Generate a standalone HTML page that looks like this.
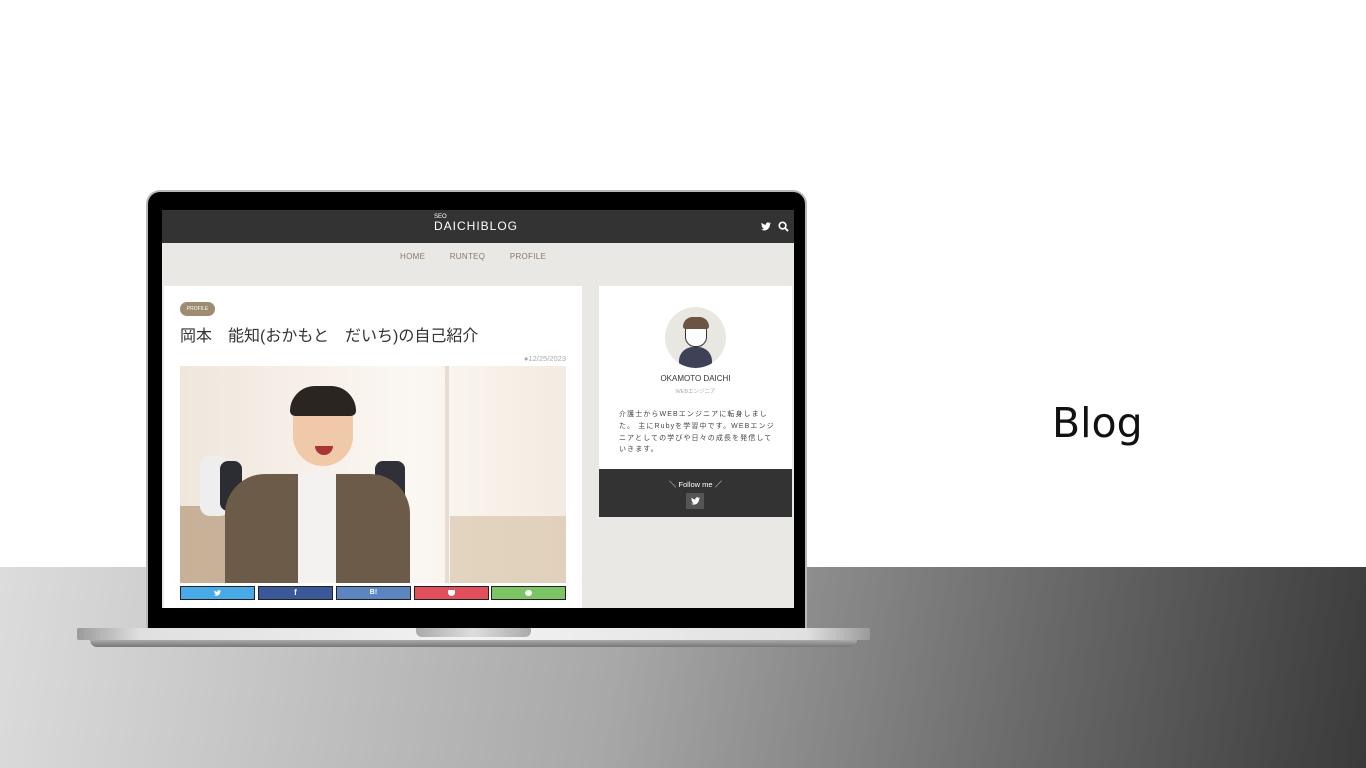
<!DOCTYPE html>
<html><head><meta charset="utf-8"><style>
*{margin:0;padding:0;box-sizing:border-box}
body{width:1366px;height:768px;position:relative;overflow:hidden;background:#fff;font-family:"Liberation Sans","Noto Sans CJK JP",sans-serif}
.floor{position:absolute;left:0;top:567px;width:1366px;height:201px;background:linear-gradient(100deg,#dcdcdc 0%,#a8a8a8 45%,#6a6a6a 75%,#3a3a3a 100%)}
.abs{position:absolute}
</style></head><body>
<div class="floor"></div>
<div class="abs" style="left:1052px;top:399px;font-size:41px;color:#111;font-family:'DejaVu Sans','Liberation Sans',sans-serif">Blog</div>

<div class="abs" style="left:146px;top:190px;width:661px;height:440px;background:#000;border-radius:14px 14px 0 0;border:2px solid #b8b8b8;border-bottom:none"></div>
<div class="abs" style="left:162px;top:210px;width:632px;height:398px;background:#e9e8e4;overflow:hidden">
  <div class="abs" style="left:0;top:0;width:632px;height:33px;background:#333"></div>
  <div class="abs" style="left:272px;top:4px;font-size:6px;color:#fff">SEO</div>
  <div class="abs" style="left:272px;top:9px;font-size:12px;color:#fff;letter-spacing:1px">DAICHIBLOG</div>
  <svg class="abs" style="left:599px;top:12px" width="10" height="9" viewBox="0 0 24 20"><path fill="#fff" d="M24 2.4c-.9.4-1.8.6-2.8.8 1-.6 1.8-1.6 2.2-2.7-1 .6-2 1-3.1 1.2C19.3.7 18 0 16.6 0c-2.7 0-4.9 2.2-4.9 4.9 0 .4 0 .8.1 1.1C7.7 5.8 4.1 3.9 1.7.9c-.4.7-.7 1.6-.7 2.5 0 1.7.9 3.2 2.2 4.1-.8 0-1.6-.2-2.2-.6v.1c0 2.4 1.7 4.4 3.9 4.8-.4.1-.8.2-1.3.2-.3 0-.6 0-.9-.1.6 2 2.4 3.4 4.6 3.4-1.7 1.3-3.8 2.1-6.1 2.1-.4 0-.8 0-1.2-.1 2.2 1.4 4.8 2.2 7.5 2.2 9.1 0 14-7.5 14-14v-.6c1-.7 1.8-1.6 2.5-2.5z"/></svg>
  <svg class="abs" style="left:616px;top:11px" width="11" height="11" viewBox="0 0 12 12"><circle cx="5" cy="5" r="3.6" fill="none" stroke="#fff" stroke-width="1.8"/><path d="M7.6 7.6L11 11" stroke="#fff" stroke-width="2"/></svg>
  <div class="abs" style="left:238px;top:42px;font-size:8px;color:#8a7b63;word-spacing:22px;letter-spacing:.3px">HOME RUNTEQ PROFILE</div>
  <div class="abs" style="left:2px;top:76px;width:418px;height:330px;background:#fff"></div>
  <div class="abs" style="left:18px;top:92px;width:35px;height:14px;border-radius:7px;background:#9d8c6f;color:#fff;font-size:5px;line-height:14px;text-align:center">PROFILE</div>
  <div class="abs" style="left:18px;top:112px;font-size:16px;color:#333;white-space:nowrap">岡本　能知(おかもと　だいち)の自己紹介</div>
  <div class="abs" style="left:354px;top:144px;font-size:7.5px;color:#aaa;width:50px;text-align:right">●12/25/2023</div>
  <div class="abs" style="left:18px;top:156px;width:386px;height:217px;background:linear-gradient(90deg,#efe6dc 0%,#f6efe8 30%,#fbf7f2 60%,#f3ebe1 100%);overflow:hidden">
    <div class="abs" style="left:265px;top:0;width:4px;height:217px;background:#e6ddd2"></div>
    <div class="abs" style="left:0;top:140px;width:60px;height:77px;background:#b59a7a;opacity:.7"></div>
    <div class="abs" style="left:270px;top:150px;width:116px;height:67px;background:#d9c6ad;opacity:.7"></div>
    <div class="abs" style="left:20px;top:90px;width:30px;height:60px;background:#eee;border-radius:10px"></div>
    <div class="abs" style="left:40px;top:95px;width:22px;height:50px;background:#2c2c33;border-radius:8px"></div>
    <div class="abs" style="left:195px;top:95px;width:30px;height:60px;background:#2f3038;border-radius:8px"></div>
    <div class="abs" style="left:45px;top:108px;width:185px;height:120px;background:#6b5b48;border-radius:40px 40px 0 0"></div>
    <div class="abs" style="left:118px;top:108px;width:38px;height:110px;background:#f4f2f0"></div>
    <div class="abs" style="left:113px;top:28px;width:60px;height:72px;background:#f0c9a8;border-radius:26px 26px 30px 30px"></div>
    <div class="abs" style="left:110px;top:20px;width:66px;height:30px;background:#2b2522;border-radius:30px 30px 6px 6px"></div>
    <div class="abs" style="left:135px;top:80px;width:18px;height:9px;background:#a33;border-radius:0 0 9px 9px"></div>
  </div>
  <div class="abs" style="left:18px;top:376px;width:75px;height:14px;background:#4aaae8;border:1px solid #222"><svg class="abs" style="left:33px;top:3px" width="7" height="6" viewBox="0 0 24 20"><path fill="#fff" d="M24 2.4c-.9.4-1.8.6-2.8.8 1-.6 1.8-1.6 2.2-2.7-1 .6-2 1-3.1 1.2C19.3.7 18 0 16.6 0c-2.7 0-4.9 2.2-4.9 4.9 0 .4 0 .8.1 1.1C7.700 5.8 4.1 3.9 1.7.9c-.4.7-.7 1.6-.7 2.5 0 1.700.9 3.2 2.2 4.1-.8 0-1.6-.2-2.2-.6v.1c0 2.4 1.7 4.4 3.9 4.8-.4.1-.8.2-1.3.2-.3 0-.6 0-.9-.1.6 2 2.4 3.4 4.6 3.4-1.7 1.3-3.8 2.1-6.1 2.1-.4 0-.8 0-1.2-.1 2.2 1.4 4.8 2.2 7.5 2.2 9.1 0 14-7.5 14-14v-.6c1-.7 1.8-1.6 2.5-2.5z"/></svg></div>
  <div class="abs" style="left:96px;top:376px;width:75px;height:14px;background:#3b5998;border:1px solid #222;color:#fff;font-size:8px;text-align:center;line-height:12px;font-weight:bold">f</div>
  <div class="abs" style="left:174px;top:376px;width:75px;height:14px;background:#5d85c0;border:1px solid #222;color:#fff;font-size:7px;text-align:center;line-height:12px;font-weight:bold">B!</div>
  <div class="abs" style="left:252px;top:376px;width:75px;height:14px;background:#e0505c;border:1px solid #222"><div class="abs" style="left:33px;top:3px;width:7px;height:6px;background:#fff;border-radius:1px 1px 4px 4px"></div></div>
  <div class="abs" style="left:329px;top:376px;width:75px;height:14px;background:#7dc564;border:1px solid #222"><div class="abs" style="left:33px;top:3px;width:7px;height:6px;background:#fff;border-radius:50%"></div></div>
  <div class="abs" style="left:437px;top:76px;width:193px;height:231px;background:#fff"></div>
  <div class="abs" style="left:503px;top:97px;width:61px;height:61px;border-radius:50%;background:#e8e7e2;overflow:hidden">
    <div class="abs" style="left:14px;top:40px;width:33px;height:26px;border-radius:14px 14px 0 0;background:#3d4257"></div>
    <div class="abs" style="left:20px;top:14px;width:22px;height:26px;border-radius:10px;background:#fff;border:1px solid #333"></div>
    <div class="abs" style="left:18px;top:10px;width:26px;height:12px;border-radius:12px 12px 3px 3px;background:#6b5443"></div>
  </div>
  <div class="abs" style="left:437px;top:164px;width:193px;text-align:center;font-size:8px;color:#333">OKAMOTO DAICHI</div>
  <div class="abs" style="left:437px;top:177px;width:193px;text-align:center;font-size:5.5px;color:#aaa">WEBエンジニア</div>
  <div class="abs" style="left:457px;top:199px;width:156px;font-size:7px;line-height:11.8px;color:#444;letter-spacing:1.1px">介護士からWEBエンジニアに転身しました。 主にRubyを学習中です。WEBエンジニアとしての学びや日々の成長を発信していきます。</div>
  <div class="abs" style="left:437px;top:259px;width:193px;height:48px;background:#333"></div>
  <div class="abs" style="left:437px;top:269px;width:193px;text-align:center;font-size:7.5px;color:#fff">＼ Follow me ／</div>
  <div class="abs" style="left:524px;top:283px;width:18px;height:16px;background:#555"></div>
  <svg class="abs" style="left:529px;top:287px" width="9" height="8" viewBox="0 0 24 20"><path fill="#fff" d="M24 2.4c-.9.4-1.8.6-2.8.8 1-.6 1.8-1.6 2.2-2.7-1 .6-2 1-3.1 1.2C19.3.7 18 0 16.6 0c-2.7 0-4.9 2.2-4.9 4.9 0 .4 0 .8.1 1.1C7.7 5.8 4.1 3.9 1.7.9c-.4.7-.7 1.6-.7 2.5 0 1.7.9 3.2 2.2 4.1-.8 0-1.6-.2-2.2-.6v.1c0 2.4 1.7 4.4 3.9 4.8-.4.1-.8.2-1.3.2-.3 0-.6 0-.9-.1.6 2 2.4 3.4 4.6 3.4-1.7 1.3-3.8 2.1-6.1 2.1-.4 0-.8 0-1.2-.1 2.2 1.4 4.8 2.2 7.5 2.2 9.1 0 14-7.5 14-14v-.6c1-.7 1.8-1.6 2.5-2.5z"/></svg>
</div>
<div class="abs" style="left:77px;top:628px;width:793px;height:12px;background:linear-gradient(90deg,#9a9a9a,#e0e0e0 8%,#f2f2f2 50%,#e0e0e0 92%,#9a9a9a);border-radius:2px"></div>
<div class="abs" style="left:90px;top:640px;width:767px;height:7px;background:linear-gradient(#aaa,#777);border-radius:0 0 40px 40px"></div>
<div class="abs" style="left:416px;top:628px;width:115px;height:9px;background:linear-gradient(90deg,#aaa,#ddd,#aaa);border-radius:0 0 6px 6px"></div>
</body></html>
